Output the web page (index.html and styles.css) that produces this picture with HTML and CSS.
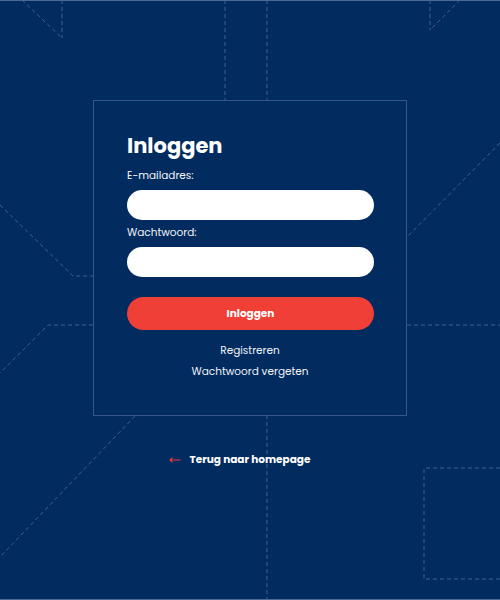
FILE: index.html
```html
<!DOCTYPE html>
<html lang="nl">
<head>
<meta charset="utf-8">
<title>Inloggen</title>
<link rel="stylesheet" href="styles.css">
</head>
<body>
<div class="screen">
  <svg class="decor" viewBox="0 0 500 600" width="500" height="600" aria-hidden="true">
    <g fill="none" stroke="#3f5f91" stroke-width="1" stroke-dasharray="4 3">
      <path d="M22 0 L62 38 M62 0 V38"/>
      <path d="M225 0 V100"/>
      <path d="M267 0 V100"/>
      <path d="M460 0 L430 30 M430 0 V30"/>
      <path d="M500 143 L407 237"/>
      <path d="M407 325 H500"/>
      <path d="M0 205 L73 276 H93"/>
      <path d="M93 325 H48 L0 373"/>
      <path d="M135 416 L0 557"/>
      <path d="M267 415 V600"/>
      <path d="M500 468 H424 V579 H500"/>
    </g>
  </svg>
  <main class="page">
    <form class="card">
      <h1 class="title">Inloggen</h1>
      <label class="label" for="email">E-mailadres:</label>
      <input class="field" id="email" type="email">
      <label class="label label-gap" for="pw">Wachtwoord:</label>
      <input class="field" id="pw" type="password">
      <button class="submit" type="button">Inloggen</button>
      <div class="links">
        <a class="link" href="#">Registreren</a>
        <a class="link" href="#">Wachtwoord vergeten</a>
      </div>
    </form>
    <a class="back" href="#">
      <svg class="back-arrow" viewBox="0 0 12 6" width="12" height="6" aria-hidden="true">
        <path d="M11.5 3 H1.2 M3.5 0.8 L1 3 L3.5 5.2" fill="none" stroke="#e8383d" stroke-width="1.2"/>
      </svg>
      Terug naar homepage
    </a>
  </main>
</div>
</body>
</html>
```
FILE: styles.css
```css
* { box-sizing: border-box; }
html, body { margin: 0; padding: 0; }
body {
  background: #022c5f;
  font-family: Poppins, "Inter", "Liberation Sans", sans-serif;
  color: #ffffff;
}
.screen {
  position: relative;
  width: 500px;
  height: 600px;
  border-top: 1px solid #4b6995;
  border-bottom: 1px solid #4b6995;
  overflow: hidden;
}
.decor {
  position: absolute;
  left: 0;
  top: -1px;
}
.page {
  position: relative;
  display: flex;
  flex-direction: column;
  align-items: center;
  padding-top: 99px;
}
.card {
  width: 314px;
  height: 316px;
  border: 1px solid #36568a;
  padding: 31px 33px 0 33px;
  display: flex;
  flex-direction: column;
}
.title {
  margin: 0 0 7px 0;
  font-size: 21px;
  line-height: 28px;
  font-weight: 700;
}
.label {
  display: block;
  font-size: 10.5px;
  line-height: 18px;
  margin-bottom: 5px;
  color: #f2f4f8;
}
.label-gap { margin-top: 4px; }
.field {
  display: block;
  width: 247px;
  height: 30px;
  border: none;
  border-radius: 15px;
  background: #ffffff;
  padding: 0 14px;
  font: inherit;
  outline: none;
}
.submit {
  margin-top: 20px;
  width: 247px;
  height: 33px;
  border: none;
  border-radius: 17px;
  background: #ef3f36;
  color: #ffffff;
  font-family: inherit;
  font-size: 10.5px;
  font-weight: 700;
  cursor: pointer;
}
.links {
  margin-top: 10px;
  display: flex;
  flex-direction: column;
  align-items: center;
}
.link {
  color: #eef1f6;
  text-decoration: none;
  font-size: 10.5px;
  line-height: 21px;
}
.back {
  position: relative;
  margin-top: 34px;
  color: #ffffff;
  text-decoration: none;
  font-size: 10.5px;
  font-weight: 700;
  line-height: 20px;
}
.back-arrow {
  position: absolute;
  right: calc(100% + 9px);
  top: 7px;
}
```
